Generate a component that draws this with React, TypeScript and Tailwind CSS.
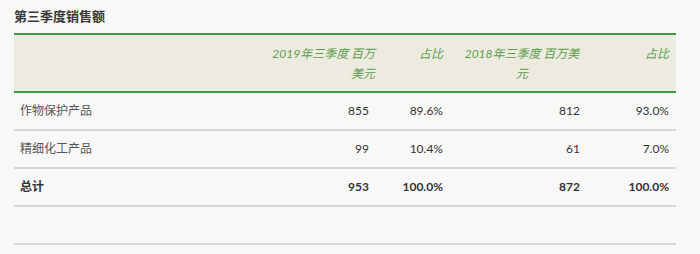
const rows = [
  { name: "作物保护产品", a: "855", ap: "89.6%", b: "812", bp: "93.0%" },
  { name: "精细化工产品", a: "99", ap: "10.4%", b: "61", bp: "7.0%" },
];

const font = "font-['Lato','Noto_Sans_CJK_SC',sans-serif]";

export default function App() {
  return (
    <div className={`min-h-[254px] w-[700px] bg-[#f8f8f8] px-[14px] pt-[6px] text-[#333] ${font}`}>
      <h3 className="h-[27px] text-[13px] font-bold leading-[20px] text-[#3a3a3a]">第三季度销售额</h3>
      <table className="w-[662px] table-fixed border-collapse text-[12px]">
        <colgroup>
          <col className="w-[248px]" />
          <col className="w-[114px]" />
          <col className="w-[74px]" />
          <col className="w-[137px]" />
          <col className="w-[89px]" />
        </colgroup>
        <thead>
          <tr className="h-[58px] border-y-2 border-[#3f9b47] bg-[#edeae0] align-top italic text-[#5d9c4f]">
            <th />
            <th className="px-[7px] pt-[9px] text-right font-normal leading-[20px]">
              <div className="ml-auto w-[106px]">2019年三季度 百万美元</div>
            </th>
            <th className="px-[7px] pt-[9px] text-right font-normal leading-[20px]">占比</th>
            <th className="px-[7px] pt-[9px] font-normal leading-[20px]">
              <div className="ml-auto w-[116px] text-center">2018年三季度 百万美元</div>
            </th>
            <th className="px-[7px] pt-[9px] text-right font-normal leading-[20px]">占比</th>
          </tr>
        </thead>
        <tbody>
          {rows.map((r) => (
            <tr key={r.name} className="h-[38px] border-b-2 border-[#d6d6d6]">
              <td className="px-[6px] text-[#555]">{r.name}</td>
              <td className="px-[7px] text-right">{r.a}</td>
              <td className="px-[7px] text-right">{r.ap}</td>
              <td className="px-[7px] text-right">{r.b}</td>
              <td className="px-[7px] text-right">{r.bp}</td>
            </tr>
          ))}
          <tr className="h-[38px] border-b-2 border-[#d6d6d6] font-bold">
            <td className="px-[6px]">总计</td>
            <td className="px-[7px] text-right">953</td>
            <td className="px-[7px] text-right">100.0%</td>
            <td className="px-[7px] text-right">872</td>
            <td className="px-[7px] text-right">100.0%</td>
          </tr>
          <tr className="h-[38px] border-b-2 border-[#d6d6d6]">
            <td colSpan={5} />
          </tr>
        </tbody>
      </table>
    </div>
  );
}
